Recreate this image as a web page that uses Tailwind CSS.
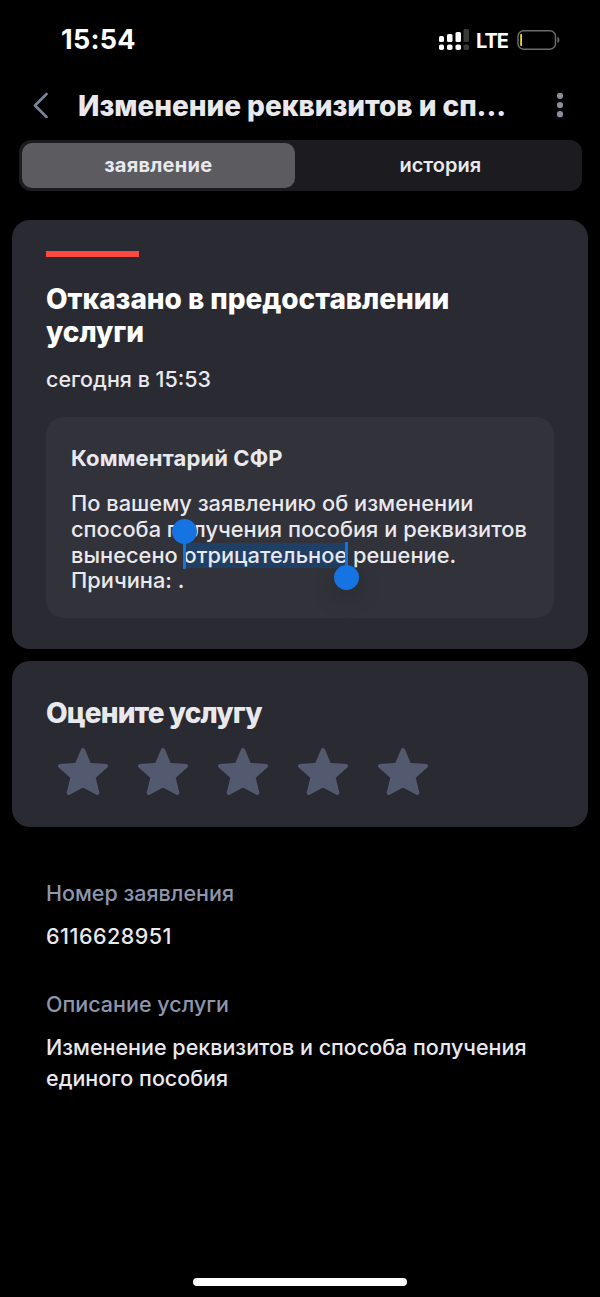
<!DOCTYPE html>
<html lang="ru">
<head>
<meta charset="utf-8">
<title>Изменение реквизитов</title>
<script src="https://cdn.jsdelivr.net/npm/@tailwindcss/browser@4"></script>
</head>
<body class="bg-black">
<svg class="hidden">
  <symbol id="star" viewBox="0 0 52 50"><path d="M26 3 L32.3 17.7 L49 19 L36.5 30 L40.3 46 L26 38.3 L11.7 46 L15.5 30 L3 19 L19.7 17.7 Z" fill="#535a6f" stroke="#535a6f" stroke-width="4" stroke-linejoin="round"/></symbol>
</svg>
<div class="flex h-[1297px] w-[600px] flex-col overflow-hidden bg-black font-['Inter',sans-serif] whitespace-nowrap text-[#e9e9ed]">
  <header class="flex h-20 shrink-0 items-center justify-between pr-10 pl-[61px] text-white">
    <span class="text-[27px] leading-8 font-bold tracking-[0.25px]">15:54</span>
    <div class="flex items-center">
      <svg class="h-[22px] w-[31px]" viewBox="0 0 31 22">
        <g fill="#fff"><rect x="0" y="7" width="5" height="6" rx="1.5"/><rect x="8" y="5" width="5.5" height="8" rx="1.5"/><rect x="16.5" y="3" width="5.5" height="10" rx="1.5"/><rect x="0" y="15.5" width="5" height="5.5" rx="1.8"/><rect x="8" y="15.5" width="5.5" height="5.5" rx="1.8"/><rect x="16.5" y="15.5" width="5.5" height="5.5" rx="1.8"/></g>
        <g fill="#3b3b3b"><rect x="24.5" y="0" width="5.5" height="13" rx="1.5"/><rect x="24.5" y="15.5" width="5.5" height="5.5" rx="1.8"/></g>
      </svg>
      <span class="mt-px ml-[6px] w-[35px] text-[20px] leading-6 font-bold tracking-[-1.1px]">LTE</span>
      <svg class="ml-[6px] h-[22px] w-[43px]" viewBox="0 0 43 22"><rect x="1" y="1.8" width="37.5" height="18.4" rx="5.5" fill="none" stroke="#6c6c6c" stroke-width="1.5"/><path d="M40.4 8v6c2.6-1 2.6-5 0-6Z" fill="#6c6c6c"/><rect x="3.2" y="5" width="1.8" height="12" rx=".7" fill="#f2d928"/></svg>
    </div>
  </header>

  <div class="flex h-[50px] shrink-0 items-center pr-[36px] pl-[32px]">
    <svg class="h-[26px] w-[18px]" viewBox="0 0 18 26"><path d="M14.5 2 L3 13.5 L14.5 25" fill="none" stroke="#79859a" stroke-width="2.6" stroke-linecap="round" stroke-linejoin="round"/></svg>
    <h1 class="mt-[2px] ml-[28px] text-[28px] leading-8 font-extrabold tracking-[-0.03px]">Изменение реквизитов и сп...</h1>
    <svg class="ml-auto h-[26px] w-[8px]" viewBox="0 0 8 26" fill="#8a8fa0"><circle cx="4" cy="3.8" r="3.1"/><circle cx="4" cy="13" r="3.1"/><circle cx="4" cy="22.2" r="3.1"/></svg>
  </div>

  <nav class="mt-[10px] ml-[19px] grid h-[51px] w-[563px] shrink-0 grid-cols-2 rounded-xl bg-[#1c1c20] p-[3px] text-center text-[20px] leading-[45px]">
    <div class="mr-[6px] h-[45px] rounded-[10px] bg-[#5c5b60] font-bold tracking-[0.25px]">заявление</div>
    <div class="ml-px font-semibold">история</div>
  </nav>

  <main class="mx-3 mt-[29px] flex flex-col">
    <section class="h-[429px] rounded-[18px] bg-[#2a2a32] px-[34px] pt-[31px]">
      <div class="h-[6px] w-[93px] bg-[#fb4841]"></div>
      <h2 class="mt-[26px] text-[28px] leading-[33px] font-extrabold tracking-[-0.05px] text-white">Отказано в предоставлении<br>услуги</h2>
      <p class="mt-[17px] text-[21.5px] leading-[26px] font-medium">сегодня в 15:53</p>
      <div class="mt-[25px] h-[201px] rounded-[18px] bg-[#32323a] px-[25px] pt-[28px]">
        <h3 class="text-[22px] leading-[26px] font-bold tracking-[0.1px]">Комментарий СФР</h3>
        <p class="mt-[20px] text-[21.8px] leading-[25.8px] font-medium tracking-[0.02px]">По вашему заявлению об изменении<br>способа получения пособия и реквизитов<br>вынесено <span class="relative inline-block bg-[#203f64]">отрицательное<i class="absolute -top-px left-[-1px] h-[27px] w-[3px] bg-[#1673e2]"></i><i class="absolute top-[-24px] left-[-12px] size-[25px] rounded-full bg-[#1673e2]"></i><i class="absolute -top-px right-[-1px] h-[27px] w-[3px] bg-[#1673e2]"></i><i class="absolute top-[22px] right-[-12px] size-[25px] rounded-full bg-[#1673e2] shadow-[0_8px_24px_rgba(0,0,0,0.2)]"></i></span> решение.<br>Причина: .</p>
      </div>
    </section>

    <section class="mt-3 h-[166px] rounded-[18px] bg-[#2a2a32] px-[34px] pt-[35px]">
      <h2 class="text-[28px] leading-[34px] font-extrabold tracking-[-0.9px]">Оцените услугу</h2>
      <div class="mt-[17px] ml-[11px] flex gap-7">
        <svg class="h-[50px] w-[52px]"><use href="#star"/></svg>
        <svg class="h-[50px] w-[52px]"><use href="#star"/></svg>
        <svg class="h-[50px] w-[52px]"><use href="#star"/></svg>
        <svg class="h-[50px] w-[52px]"><use href="#star"/></svg>
        <svg class="h-[50px] w-[52px]"><use href="#star"/></svg>
      </div>
    </section>

    <dl class="mt-[51px] px-[34px] text-[21.5px] leading-[31px] font-medium">
      <dt class="text-[#8e96ae]">Номер заявления</dt>
      <dd class="mt-3 tracking-[0.5px]">6116628951</dd>
      <dt class="mt-[37px] text-[#8e96ae]">Описание услуги</dt>
      <dd class="mt-3">Изменение реквизитов и способа получения<br>единого пособия</dd>
    </dl>
  </main>

  <div class="mx-auto mt-auto mb-[11px] h-[8px] w-[214px] shrink-0 rounded-full bg-white"></div>
</div>
</body>
</html>
